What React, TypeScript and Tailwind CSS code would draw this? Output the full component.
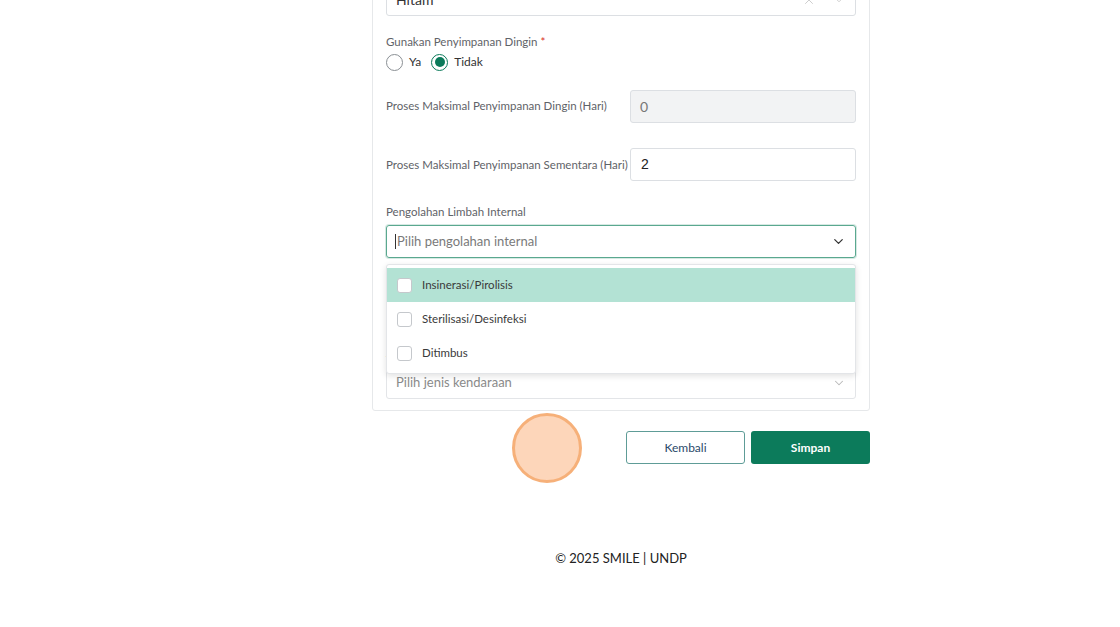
import React from 'react';
import { ChevronDown, X } from 'lucide-react';

const options = ['Insinerasi/Pirolisis', 'Sterilisasi/Desinfeksi', 'Ditimbus'];

function Label({ children }: { children: React.ReactNode }) {
  return <div className="text-[11.5px] leading-4 text-[#5f6368] whitespace-nowrap">{children}</div>;
}

export default function App() {
  return (
    <div className="min-h-[627px] bg-white font-['Lato','Noto_Sans',sans-serif] flex overflow-hidden relative">
      {/* left spacer (sidebar scrolled away) */}
      <div className="w-[122px] shrink-0" />

      <main className="flex-1 flex flex-col items-center">
        <div className="w-[498px] -mt-[18px]">
          {/* Form card */}
          <div className="border border-[#e6e8ea] rounded-b-[3px] px-[13px] pb-[11px]">
            {/* Warna select (cut off at top) */}
            <div className="h-[33px] border border-[#dcdfe3] rounded-[3px] flex items-center px-[9px] text-[14px] text-[#333]">
              <span className="flex-1">Hitam</span>
              <X className="w-[14px] h-[14px] text-[#c7c7c7] mr-[16px]" strokeWidth={1.5} />
              <ChevronDown className="w-[14px] h-[14px] text-[#c7c7c7]" strokeWidth={1.5} />
            </div>

            {/* Radio */}
            <div className="mt-[18px]">
              <Label>
                Gunakan Penyimpanan Dingin <span className="text-[#d93025]">*</span>
              </Label>
              <div className="flex items-center h-[18px] mt-[3px] text-[12px] text-[#333]">
                <span className="w-[17px] h-[17px] rounded-full border border-[#8a8f94] bg-white" />
                <span className="ml-[6px]">Ya</span>
                <span className="ml-[10px] w-[17px] h-[17px] rounded-full border-[1.5px] border-[#0b7a5a] flex items-center justify-center">
                  <span className="w-[10px] h-[10px] rounded-full bg-[#0b7a5a]" />
                </span>
                <span className="ml-[6px]">Tidak</span>
              </div>
            </div>

            {/* Dingin */}
            <div className="flex items-center mt-[19px]">
              <div className="w-[244px] shrink-0 -mt-[2px]">
                <Label>Proses Maksimal Penyimpanan Dingin (Hari)</Label>
              </div>
              <div className="flex-1 h-[33px] border border-[#dcdfe3] bg-[#f2f3f4] rounded-[3px] flex items-center px-[9px] text-[14px] text-[#777]">
                0
              </div>
            </div>

            {/* Sementara */}
            <div className="flex items-center mt-[25px]">
              <div className="w-[244px] shrink-0">
                <Label>Proses Maksimal Penyimpanan Sementara (Hari)</Label>
              </div>
              <div className="flex-1 h-[33px] border border-[#dcdfe3] bg-white rounded-[3px] flex items-center px-[10px] text-[14px] text-[#222] font-['Liberation_Sans',sans-serif]">
                2
              </div>
            </div>

            {/* Pengolahan internal */}
            <div className="mt-[23px] relative">
              <Label>Pengolahan Limbah Internal</Label>
              <div className="mt-[5px] h-[33px] border border-[#5aa88f] rounded-[3px] shadow-[0_0_0_1px_rgba(90,168,143,0.25)] flex items-center pl-[8px] pr-[9px] text-[13px]">
                <span className="w-px h-[15px] bg-[#333] mr-[1px]" />
                <span className="flex-1 text-[#7a7a7a]">Pilih pengolahan internal</span>
                <ChevronDown className="w-[15px] h-[15px] text-[#333]" strokeWidth={2} />
              </div>

              {/* Dropdown menu */}
              <div className="absolute left-0 right-0 top-[60px] z-10 bg-white border border-[#e3e5e8] rounded-[3px] shadow-[0_2px_6px_rgba(0,0,0,0.12)] pt-[3px] pb-[3px]">
                {options.map((opt, i) => (
                  <div
                    key={opt}
                    className={`h-[34px] flex items-center pl-[10px] text-[11.5px] text-[#3a3a3a] ${i === 0 ? 'bg-[#b3e2d4]' : 'bg-white'}`}
                  >
                    <span className="w-[15px] h-[15px] rounded-[3px] border border-[#c5c8cc] bg-white" />
                    <span className="ml-[10px]">{opt}</span>
                  </div>
                ))}
              </div>
            </div>

            {/* Pengolahan eksternal & kendaraan (mostly hidden behind menu) */}
            <div className="mt-[23px]">
              <Label>Pengolahan Limbah Eksternal</Label>
              <div className="mt-[5px] h-[33px] border border-[#e3e5e8] rounded-[3px]" />
            </div>
            <div className="mt-[10px]">
              <Label>Jenis Kendaraan</Label>
              <div className="mt-[5px] h-[33px] border border-[#e3e5e8] rounded-[3px] flex items-center px-[9px] text-[13px]">
                <span className="flex-1 text-[#8a8a8a]">Pilih jenis kendaraan</span>
                <ChevronDown className="w-[14px] h-[14px] text-[#b8b8b8]" strokeWidth={1.75} />
              </div>
            </div>
          </div>

          {/* Actions */}
          <div className="flex justify-end gap-[6px] mt-[20px]">
            <button className="w-[119px] h-[33px] border border-[#5e9c97] rounded-[3px] bg-white text-[12px] text-[#2b4a6a]">
              Kembali
            </button>
            <button className="w-[119px] h-[33px] rounded-[3px] bg-[#0c7b5b] text-[12px] font-bold text-white">
              Simpan
            </button>
          </div>
        </div>

        <footer className="mt-[85px] text-[13px] text-[#222]">© 2025 SMILE | UNDP</footer>
      </main>

      {/* click indicator */}
      <div className="absolute left-[512px] top-[413px] w-[70px] h-[70px] rounded-full bg-[#fdd6ba] border-[3px] border-[#f6b079] pointer-events-none" />
    </div>
  );
}
